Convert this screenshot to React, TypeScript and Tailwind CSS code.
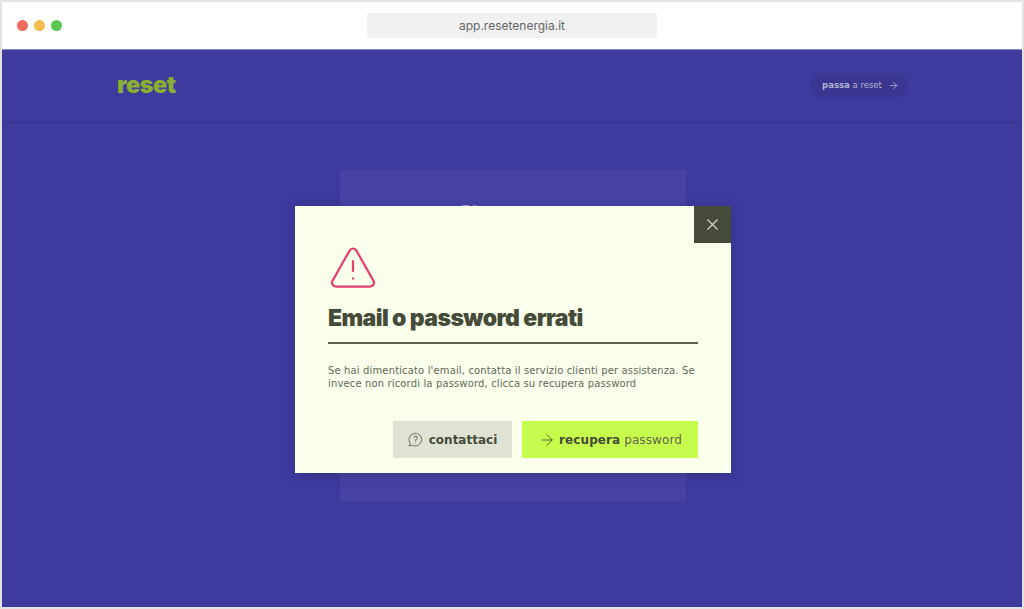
import { ArrowRight, X } from 'lucide-react';

function WarningIcon() {
  return (
    <svg width="46" height="42" viewBox="0 0 46 42" fill="none" stroke="#e0406f" strokeWidth="2.2" strokeLinecap="round" strokeLinejoin="round">
      <path d="M19.600 3.600 2.600 33.600c-1.600 2.900.3 6 3.600 6h33.600c3.300 0 5.200-3.100 3.600-6l-17-30c-1.600-2.800-5.200-2.800-6.800 0Z" />
      <path d="M23 14v10" />
      <path d="M23 31.300v.4" />
    </svg>
  );
}

function ChatIcon() {
  return (
    <svg width="15" height="15" viewBox="0 0 15 15" fill="none" stroke="#7d8074" strokeWidth="1.1" strokeLinecap="round" strokeLinejoin="round">
      <path d="M2.200 11.200A6.300 6.300 0 1 1 4.500 13.200L1 14Z" />
      <path d="M6 5.800a1.700 1.700 0 1 1 2.500 1.500c-.7.4-1 .8-1 1.500" />
      <path d="M7.500 10.700v.1" />
    </svg>
  );
}

export default function App() {
  return (
    <div className="w-[1024px] h-[609px] flex flex-col border-2 border-[#e2e2e2] overflow-hidden font-['Noto_Sans',sans-serif]">
      {/* browser chrome */}
      <div className="h-[47px] shrink-0 bg-white flex items-center relative">
        <div className="flex gap-[6px] pl-[15px]">
          <span className="w-[11px] h-[11px] rounded-full bg-[#f26b60]" />
          <span className="w-[11px] h-[11px] rounded-full bg-[#f5bd4f]" />
          <span className="w-[11px] h-[11px] rounded-full bg-[#5cc853]" />
        </div>
        <div className="absolute left-[365px] top-[11px] w-[290px] h-[25px] rounded-[3px] bg-[#f1f1f1] flex items-center justify-center text-[12px] text-[#666666] font-['Inter',sans-serif]">
          app.resetenergia.it
        </div>
      </div>

      <div className="flex-1 flex flex-col bg-[#3e3a9e] border-t border-[#8c89c6]">
        {/* header */}
        <div className="h-[73px] shrink-0 border-b border-[#37338f] flex items-center justify-between pl-[115px] pr-[114px]">
          <span className="text-[23.500px] font-black tracking-[-0.5px] text-[#8aae34] font-['Inter',sans-serif] leading-none -mt-[2px]">reset</span>
          <div className="h-[24px] w-[97px] -mt-[2px] pl-[2px] rounded-full bg-[#3a3691] flex items-center justify-center gap-[6px] pt-[1px] text-[8.500px] text-[#b4b3cf] font-['DejaVu_Sans',sans-serif]">
            <span className="whitespace-nowrap">
              <b className="font-bold">passa</b> a reset
            </span>
            <ArrowRight size={11} strokeWidth={1.750} />
          </div>
        </div>

        {/* page behind the modal */}
        <div className="relative flex-1 flex justify-center pt-[47px] pl-[2px]">
          <div className="w-[346px] h-[331px] bg-[#4842a3] pl-[122px] pt-[35px] flex gap-[4px] items-start">
            <span className="w-[7px] h-[1px] bg-[#a5a3d0]" />
            <span className="w-[4px] h-[1px] bg-[#8582c0]" />
          </div>

          {/* modal */}
          <div className="absolute left-[293px] top-[83px] w-[436px] h-[267px] bg-[#f9ffeb] shadow-[0_2px_12px_rgba(30,30,80,0.3)] pl-[33px] pr-[33px] pt-[41px] flex flex-col">
            <button className="absolute right-0 top-0 w-[37px] h-[37px] bg-[#464a38] flex items-center justify-center text-[#d8dacb]">
              <X size={19} strokeWidth={1.400} />
            </button>
            <div className="pl-[2px]">
              <WarningIcon />
            </div>
            <h2 className="mt-[14px] text-[23px] leading-[30px] font-black tracking-[-0.6px] text-[#464a38] font-['Inter',sans-serif]">
              Email o password errati
            </h2>
            <div className="mt-[9px] h-[2px] bg-[#5c6048]" />
            <p className="mt-[21px] text-[10px] leading-[12.500px] tracking-[0.14px] text-[#64685a] font-['DejaVu_Sans',sans-serif]">
              Se hai dimenticato l'email, contatta il servizio clienti per assistenza. Se invece non ricordi la password, clicca su recupera password
            </p>
            <div className="mt-[31px] flex justify-end gap-[10px] text-[12px] text-[#464a38] font-['DejaVu_Sans',sans-serif]">
              <button className="w-[119px] h-[37px] bg-[#e0e3d4] flex items-center justify-center gap-[6px]">
                <ChatIcon />
                <span className="font-bold">contattaci</span>
              </button>
              <button className="w-[176px] h-[37px] bg-[#c6fd4d] flex items-center justify-center gap-[3px] tracking-[0.1px]">
                <ArrowRight size={18} strokeWidth={1.100} />
                <span>
                  <b className="font-bold">recupera</b> <span className="text-[#5f6450]">password</span>
                </span>
              </button>
            </div>
          </div>
        </div>
      </div>
    </div>
  );
}
